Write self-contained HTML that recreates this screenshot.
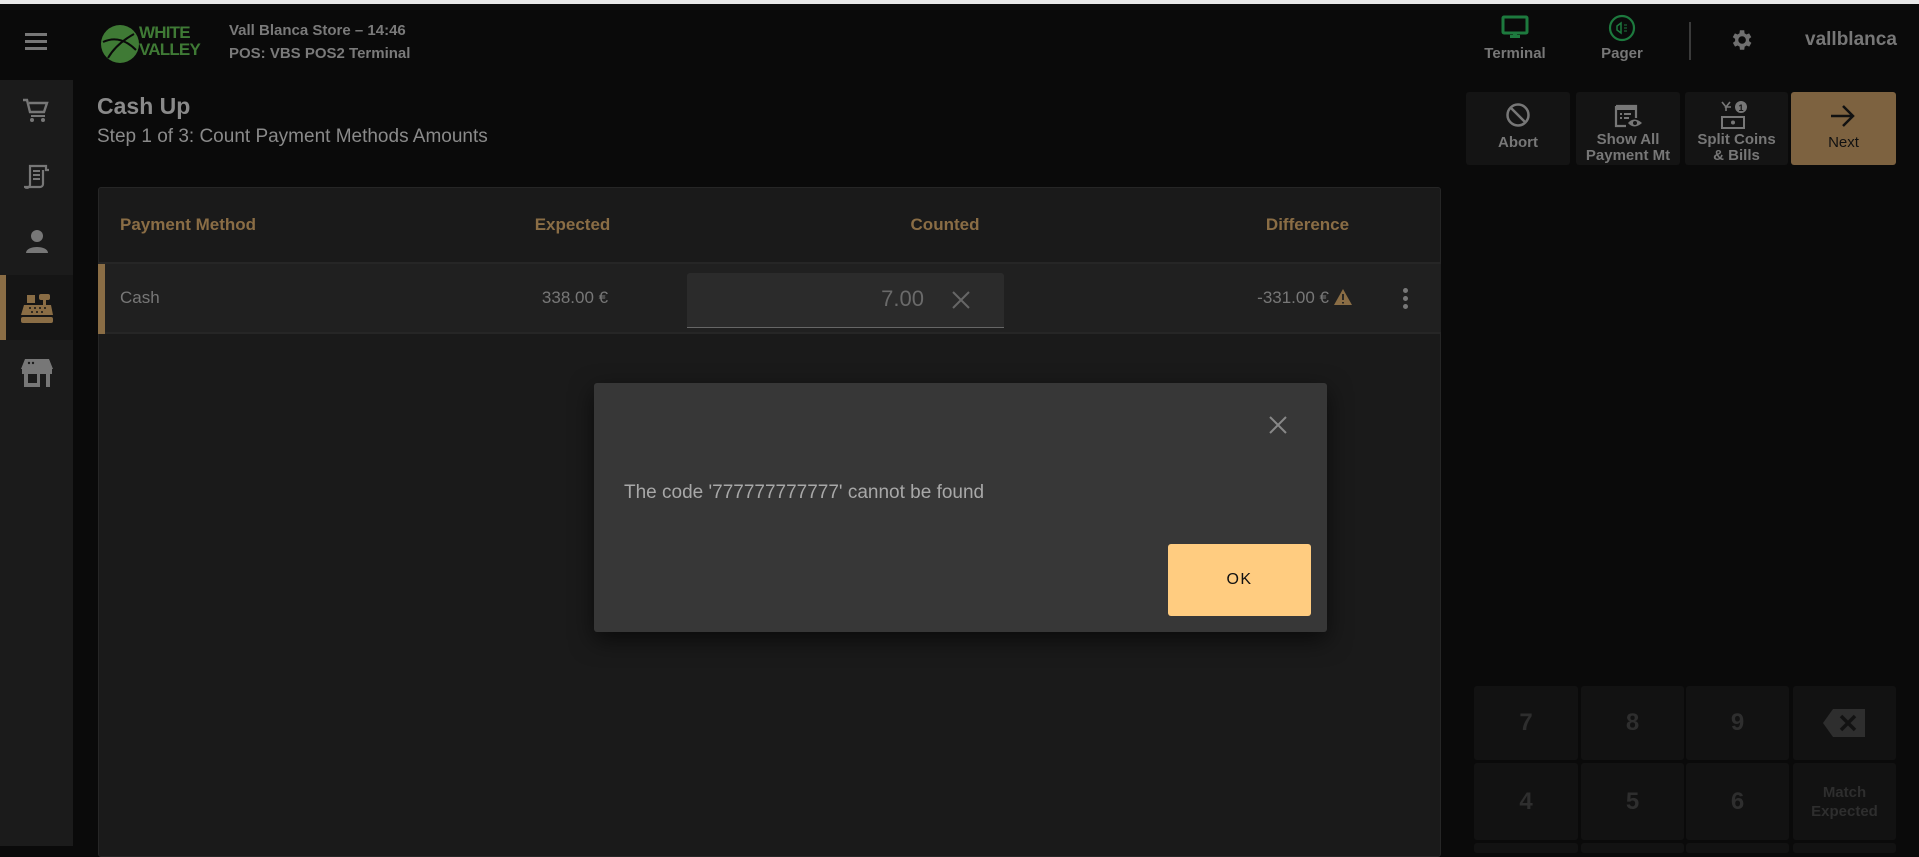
<!DOCTYPE html>
<html><head><meta charset="utf-8"><style>
*{margin:0;padding:0;box-sizing:border-box}
body{width:1919px;height:846px;background:#0a0a0a;font-family:"Liberation Sans",sans-serif;position:relative;overflow:hidden;color:#8a8a8a}
.a{position:absolute}
.topline{left:0;top:0;width:1919px;height:4px;background:#e8e8e8}
.side{left:0;top:80px;width:73px;height:766px;background:#1b1b1b}
.gold{color:#8a6d45}
.btn{background:#141414;border-radius:3px;text-align:center;font-size:15px;font-weight:bold;color:#777;line-height:16px}
.key{background:#121212;border-radius:3px;color:#2e2e2e;font-size:24px;font-weight:bold;display:flex;align-items:center;justify-content:center}
</style></head><body>
<div class="a topline"></div>
<div class="a" style="left:25px;top:33px;width:22px;height:3px;background:#777;box-shadow:0 7px 0 #777,0 14px 0 #777"></div>
<svg class="a" style="left:100px;top:24px" width="40" height="40" viewBox="0 0 40 40"><circle cx="20" cy="20" r="19" fill="#3f7a35"/><path d="M3 18 Q20 10 36 26 M8 34 Q16 20 34 10" stroke="#0a0a0a" stroke-width="2" fill="none"/></svg>
<div class="a" style="left:139px;top:24px;color:#3f7a35;font-size:17px;font-weight:bold;line-height:17px;letter-spacing:-0.8px">WHITE<br>VALLEY</div>
<div class="a" style="left:229px;top:19px;font-size:15px;font-weight:bold;color:#7a7a7a;line-height:23px">Vall Blanca Store – 14:46<br>POS: VBS POS2 Terminal</div>
<svg class="a" style="left:1501px;top:15px" width="28" height="26" viewBox="0 0 28 26"><rect x="2" y="2" width="24" height="16" rx="1" fill="none" stroke="#1d7a3e" stroke-width="3"/><rect x="9" y="20" width="10" height="3" fill="#1d7a3e"/><rect x="12" y="17" width="4" height="4" fill="#1d7a3e"/></svg>
<div class="a" style="left:1480px;top:45px;width:70px;text-align:center;font-size:15px;font-weight:bold;color:#777">Terminal</div>
<svg class="a" style="left:1608px;top:14px" width="28" height="28" viewBox="0 0 28 28"><circle cx="14" cy="14" r="12" fill="none" stroke="#1d7a3e" stroke-width="2.2"/><path d="M9 12 L13 9 L13 19 L9 16 Z" fill="none" stroke="#1d7a3e" stroke-width="1.5"/><path d="M16 11h3M16 14h3M16 17h3" stroke="#1d7a3e" stroke-width="1"/></svg>
<div class="a" style="left:1590px;top:45px;width:64px;text-align:center;font-size:15px;font-weight:bold;color:#777">Pager</div>
<div class="a" style="left:1689px;top:22px;width:2px;height:38px;background:#3a3a3a"></div>
<svg class="a" style="left:1728px;top:27px" width="26" height="26" viewBox="0 0 24 24"><path fill="#6f6f6f" d="M19.4 13a7.5 7.5 0 0 0 0-2l2.1-1.6-2-3.5-2.5 1a7 7 0 0 0-1.7-1L15 3h-4l-.4 2.9a7 7 0 0 0-1.7 1l-2.5-1-2 3.5L6.6 11a7.5 7.5 0 0 0 0 2l-2.1 1.6 2 3.5 2.5-1a7 7 0 0 0 1.7 1L11 21h4l.4-2.9a7 7 0 0 0 1.7-1l2.5 1 2-3.5zM13 15.5A3.5 3.5 0 1 1 13 8.5a3.5 3.5 0 0 1 0 7z"/></svg>
<div class="a" style="left:1805px;top:29px;font-size:19px;font-weight:bold;color:#777">vallblanca</div>
<div class="a side"></div>
<div class="a" style="left:0;top:275px;width:73px;height:65px;background:#151515"></div>
<div class="a" style="left:0;top:275px;width:6px;height:65px;background:#8a6d45"></div>
<svg class="a" style="left:22px;top:97px" width="28" height="26" viewBox="0 0 28 26"><path d="M1 3h4l3 12h14l3-9H7" fill="none" stroke="#777" stroke-width="2.4"/><path d="M9 19h14" stroke="#777" stroke-width="2"/><circle cx="10" cy="23" r="2" fill="#777"/><circle cx="21" cy="23" r="2" fill="#777"/></svg>
<svg class="a" style="left:24px;top:163px" width="26" height="28" viewBox="0 0 26 28"><path d="M6 22V3h16v4h3M18 3h4M6 22a3 3 0 0 1-5 2h15a3 3 0 0 0 3-3V7" fill="none" stroke="#777" stroke-width="2.2"/><path d="M9 8h7M9 12h7M9 16h7" stroke="#777" stroke-width="2"/></svg>
<svg class="a" style="left:25px;top:228px" width="24" height="26" viewBox="0 0 24 26"><circle cx="12" cy="8" r="6" fill="#777"/><path d="M1 25c0-8 22-8 22 0z" fill="#777"/></svg>
<svg class="a" style="left:20px;top:293px" width="34" height="32" viewBox="0 0 34 32"><rect x="7" y="2" width="8" height="8" fill="#8a6d45"/><rect x="19" y="1" width="11" height="6" rx="2" fill="#8a6d45"/><rect x="23" y="7" width="3" height="5" fill="#8a6d45"/><path d="M4 12h27l2 10H1z" fill="#8a6d45"/><rect x="1" y="24" width="32" height="6" rx="2" fill="#8a6d45"/><g fill="#151515"><circle cx="10" cy="15" r="1"/><circle cx="15" cy="15" r="1"/><circle cx="20" cy="15" r="1"/><circle cx="25" cy="15" r="1"/><circle cx="12" cy="19" r="1"/><circle cx="17" cy="19" r="1"/><circle cx="22" cy="19" r="1"/></g></svg>
<svg class="a" style="left:21px;top:358px" width="32" height="30" viewBox="0 0 32 30"><path d="M4 1h24l4 10H0z" fill="#777"/><rect x="1" y="11" width="30" height="5" fill="#777"/><rect x="3" y="16" width="4" height="13" fill="#777"/><rect x="25" y="16" width="4" height="13" fill="#777"/><rect x="7" y="25" width="12" height="4" fill="#777"/><rect x="16" y="16" width="3" height="9" fill="#777"/><circle cx="8" cy="5" r="1.2" fill="#1b1b1b"/><circle cx="12" cy="5" r="1.2" fill="#1b1b1b"/></svg>
<div class="a" style="left:97px;top:93px;font-size:23px;font-weight:bold;color:#8a8a8a">Cash Up</div>
<div class="a" style="left:97px;top:126px;font-size:19px;color:#8a8a8a">Step 1 of 3: Count Payment Methods Amounts</div>
<div class="a btn" style="left:1466px;top:92px;width:104px;height:73px;padding-top:43px">Abort</div>
<svg class="a" style="left:1505px;top:102px" width="26" height="26" viewBox="0 0 26 26"><circle cx="13" cy="13" r="10.5" fill="none" stroke="#777" stroke-width="2.5"/><path d="M6 6l14 14" stroke="#777" stroke-width="2.5"/></svg>
<div class="a btn" style="left:1576px;top:92px;width:104px;height:73px;padding-top:40px">Show All<br>Payment Mt</div>
<svg class="a" style="left:1614px;top:104px" width="30" height="26" viewBox="0 0 30 26"><path d="M2 2h20v12M2 2v20h10" fill="none" stroke="#777" stroke-width="2.2"/><rect x="2" y="2" width="20" height="4" fill="#777"/><path d="M6 10h2M10 10h7M6 14h2M10 14h5" stroke="#777" stroke-width="2"/><path d="M14 19q6-7 14 0q-8 7-14 0z" fill="#777"/><circle cx="21" cy="19" r="2" fill="#141414"/></svg>
<div class="a btn" style="left:1685px;top:92px;width:103px;height:73px;padding-top:40px">Split Coins<br>&amp; Bills</div>
<svg class="a" style="left:1720px;top:100px" width="34" height="30" viewBox="0 0 34 30"><path d="M2 2l4 5v4M10 2 6 7h5" fill="none" stroke="#777" stroke-width="1.6"/><circle cx="21" cy="7" r="6" fill="#777"/><text x="21" y="11" font-size="9" text-anchor="middle" fill="#141414" font-family="Liberation Sans" font-weight="bold">1</text><rect x="2" y="17" width="22" height="11" fill="none" stroke="#777" stroke-width="2"/><circle cx="13" cy="22.5" r="2" fill="#777"/></svg>
<div class="a btn" style="left:1791px;top:92px;width:105px;height:73px;padding-top:43px;background:#7d6240;color:#111;font-weight:normal">Next</div>
<svg class="a" style="left:1829px;top:103px" width="28" height="26" viewBox="0 0 28 26"><path d="M2 13h22M14 3l10 10-10 10" fill="none" stroke="#111" stroke-width="2.5"/></svg>
<div class="a" style="left:98px;top:187px;width:1343px;height:670px;background:#1a1a1a;border:1px solid #262626;border-radius:3px"></div>
<div class="a" style="left:98px;top:262px;width:1343px;height:2px;background:#262626"></div>
<div class="a gold" style="left:120px;top:215px;font-size:17px;font-weight:bold">Payment Method</div>
<div class="a gold" style="left:500px;top:215px;width:145px;text-align:center;font-size:17px;font-weight:bold">Expected</div>
<div class="a gold" style="left:870px;top:215px;width:150px;text-align:center;font-size:17px;font-weight:bold">Counted</div>
<div class="a gold" style="left:1230px;top:215px;width:155px;text-align:center;font-size:17px;font-weight:bold">Difference</div>
<div class="a" style="left:98px;top:264px;width:1343px;height:70px;background:#202020;border-bottom:2px solid #262626"></div>
<div class="a" style="left:98px;top:264px;width:7px;height:70px;background:#8a6d45"></div>
<div class="a" style="left:120px;top:288px;font-size:17px;color:#777">Cash</div>
<div class="a" style="left:500px;top:288px;width:150px;text-align:center;font-size:17px;color:#777">338.00 €</div>
<div class="a" style="left:687px;top:273px;width:317px;height:55px;background:#2b2b2b;border-radius:3px 3px 0 0;border-bottom:1px solid #666"></div>
<div class="a" style="left:800px;top:286px;width:124px;text-align:right;font-size:22px;color:#6a6a6a">7.00</div>
<svg class="a" style="left:951px;top:290px" width="20" height="20" viewBox="0 0 20 20"><path d="M2 2l16 16M18 2 2 18" stroke="#666" stroke-width="2"/></svg>
<div class="a" style="left:1200px;top:288px;width:129px;text-align:right;font-size:17px;color:#777">-331.00 €</div>
<svg class="a" style="left:1334px;top:289px" width="18" height="16" viewBox="0 0 18 16"><path d="M9 0 18 16H0z" fill="#8a6d45"/><path d="M9 5v6M9 13v1.5" stroke="#202020" stroke-width="1.8"/></svg>
<div class="a" style="left:1403px;top:288px;width:5px;height:5px;border-radius:50%;background:#777;box-shadow:0 8px 0 #777,0 16px 0 #777"></div>
<div class="a key" style="left:1474px;top:686px;width:104px;height:74px">7</div>
<div class="a key" style="left:1581px;top:686px;width:103px;height:74px">8</div>
<div class="a key" style="left:1686px;top:686px;width:103px;height:74px">9</div>
<div class="a key" style="left:1793px;top:686px;width:103px;height:74px"><svg width="44" height="28" viewBox="0 0 44 28"><path d="M10 0h32v28H10L0 14z" fill="#2e2e2e"/><path d="M18 7l14 14M32 7 18 21" stroke="#121212" stroke-width="3.5"/></svg></div>
<div class="a key" style="left:1474px;top:763px;width:104px;height:77px">4</div>
<div class="a key" style="left:1581px;top:763px;width:103px;height:77px">5</div>
<div class="a key" style="left:1686px;top:763px;width:103px;height:77px">6</div>
<div class="a key" style="left:1793px;top:763px;width:103px;height:77px;font-size:15px;text-align:center;line-height:19px">Match<br>Expected</div>
<div class="a key" style="left:1474px;top:843px;width:104px;height:10px"></div>
<div class="a key" style="left:1581px;top:843px;width:103px;height:10px"></div>
<div class="a key" style="left:1686px;top:843px;width:103px;height:10px"></div>
<div class="a key" style="left:1793px;top:843px;width:103px;height:10px"></div>
<div class="a" style="left:594px;top:383px;width:733px;height:249px;background:#373737;border-radius:3px;box-shadow:0 8px 24px rgba(0,0,0,.6)"></div>
<svg class="a" style="left:1269px;top:416px" width="18" height="18" viewBox="0 0 18 18"><path d="M1 1l16 16M17 1 1 17" stroke="#888" stroke-width="2"/></svg>
<div class="a" style="left:624px;top:482px;font-size:19px;color:#a8a8a8">The code '777777777777' cannot be found</div>
<div class="a" style="left:1168px;top:544px;width:143px;height:72px;background:#ffcc80;border-radius:3px;color:#111;font-size:16px;letter-spacing:1.5px;display:flex;align-items:center;justify-content:center">OK</div>
</body></html>
